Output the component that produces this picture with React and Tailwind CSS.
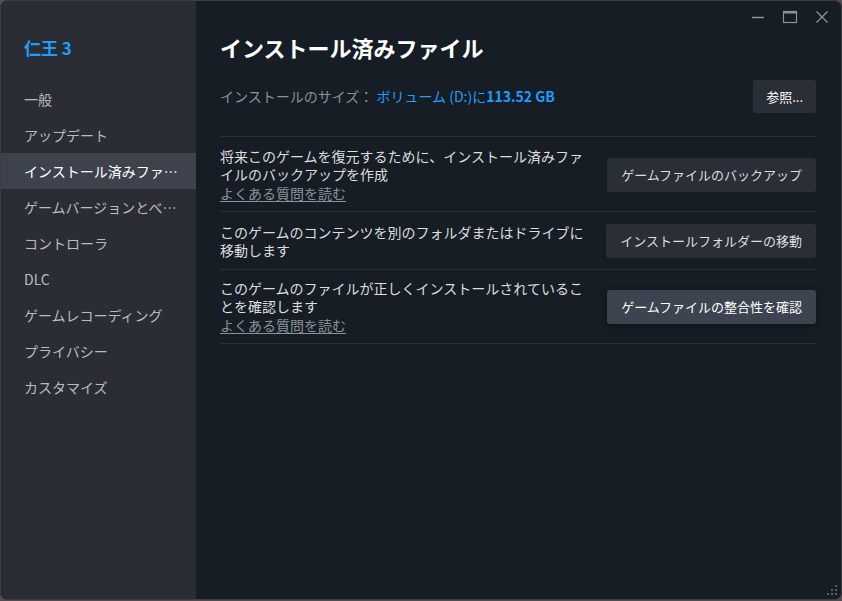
import React from 'react'

const FONT = { fontFamily: '"Noto Sans CJK JP", "Noto Sans", "Liberation Sans", sans-serif' }

const NAV = [
  '一般',
  'アップデート',
  'インストール済みファ…',
  'ゲームバージョンとべ…',
  'コントローラ',
  'DLC',
  'ゲームレコーディング',
  'プライバシー',
  'カスタマイズ',
]

const ROWS = [
  {
    text: '将来このゲームを復元するために、インストール済みファイルのバックアップを作成',
    link: true,
    button: 'ゲームファイルのバックアップ',
    pad: 'pt-[10px] pb-[9px]',
  },
  {
    text: 'このゲームのコンテンツを別のフォルダまたはドライブに移動します',
    link: false,
    button: 'インストールフォルダーの移動',
    pad: 'pt-[11px] pb-[10px]',
  },
  {
    text: 'このゲームのファイルが正しくインストールされていることを確認します',
    link: true,
    button: 'ゲームファイルの整合性を確認',
    active: true,
    pad: 'pt-[9px] pb-[9px]',
  },
]

function WindowControls() {
  return (
    <div className="absolute right-0 top-0 flex h-8 items-center gap-[14px] pr-[10px] text-[#8b929a]">
      <svg width="18" height="18" viewBox="0 0 18 18">
        <path d="M3 9.5h12" stroke="currentColor" strokeWidth="1.3" />
      </svg>
      <svg width="18" height="18" viewBox="0 0 18 18">
        <rect x="2.5" y="3.5" width="13" height="11" fill="none" stroke="currentColor" strokeWidth="1.2" />
        <path d="M2.5 4.5h13" stroke="currentColor" strokeWidth="2" />
      </svg>
      <svg width="18" height="18" viewBox="0 0 18 18">
        <path d="M3.5 3.5l11 11M14.5 3.5l-11 11" stroke="currentColor" strokeWidth="1.3" />
      </svg>
    </div>
  )
}

function ResizeGrip() {
  const dots = [
    [8, 0],
    [8, 4],
    [4, 4],
    [8, 8],
    [4, 8],
    [0, 8],
  ]
  return (
    <svg className="absolute bottom-[3px] right-[3px]" width="11" height="11" viewBox="0 0 11 11">
      {dots.map(([x, y]) => (
        <rect key={`${x}-${y}`} x={x} y={y} width="2" height="2" fill="#5c6068" />
      ))}
    </svg>
  )
}

export default function App() {
  return (
    <div className="h-[601px] w-[842px] overflow-hidden bg-[#5b4a4c]" style={FONT}>
      <div className="relative flex h-[600px] w-[842px] overflow-hidden rounded-[7px] border border-[#3b3e45] bg-[#171d25]">
        <aside className="flex w-[195px] shrink-0 flex-col bg-[#2a2d34]">
          <div className="px-[23px] pb-[21px] pt-[35px] text-[17px] font-bold leading-6 text-[#1a9fff]">仁王 3</div>
          <nav className="flex flex-col">
            {NAV.map((item, i) => (
              <div
                key={item}
                className={
                  i === 2
                    ? 'flex h-9 items-center whitespace-nowrap bg-[#3d424c] px-[23px] text-[14px] text-white'
                    : 'flex h-9 items-center whitespace-nowrap px-[23px] text-[14px] text-[#b8bcbf]'
                }
              >
                {item}
              </div>
            ))}
          </nav>
        </aside>

        <main className="flex-1 pl-6 pr-[25px] pt-[30px]">
          <h1 className="text-[22px] font-bold leading-8 text-white">インストール済みファイル</h1>

          <div className="mt-[17px] flex items-center justify-between pb-[23px]">
            <div className="text-[14px]">
              <span className="text-[#8b929a]">インストールのサイズ： </span>
              <span className="text-[#1a9fff]">
                ボリューム (D:)に<span className="font-bold">113.52 GB</span>
              </span>
            </div>
            <button className="h-[33px] rounded-[3px] bg-[#2a2e36] px-[13px] text-[13px] text-white">参照...</button>
          </div>

          <div className="border-t border-[#2b3039]">
            {ROWS.map((row) => (
              <div
                key={row.button}
                className={`flex items-center justify-between border-b border-[#2b3039] ${row.pad}`}
              >
                <div className="w-[372px] text-[14px] leading-[18px] text-[#dcdedf]">
                  <div>{row.text}</div>
                  {row.link && (
                    <div className="mt-px text-[#8b929a] underline underline-offset-2">よくある質問を読む</div>
                  )}
                </div>
                <button
                  className={
                    row.active
                      ? 'h-[34px] rounded-[3px] bg-[#3d4450] px-[14px] text-[13px] text-white shadow-[0_2px_6px_rgba(0,0,0,0.35)]'
                      : 'h-[34px] rounded-[3px] bg-[#2a2e36] px-[14px] text-[13px] text-[#dcdedf]'
                  }
                >
                  {row.button}
                </button>
              </div>
            ))}
          </div>
        </main>

        <WindowControls />
        <ResizeGrip />
      </div>
    </div>
  )
}
